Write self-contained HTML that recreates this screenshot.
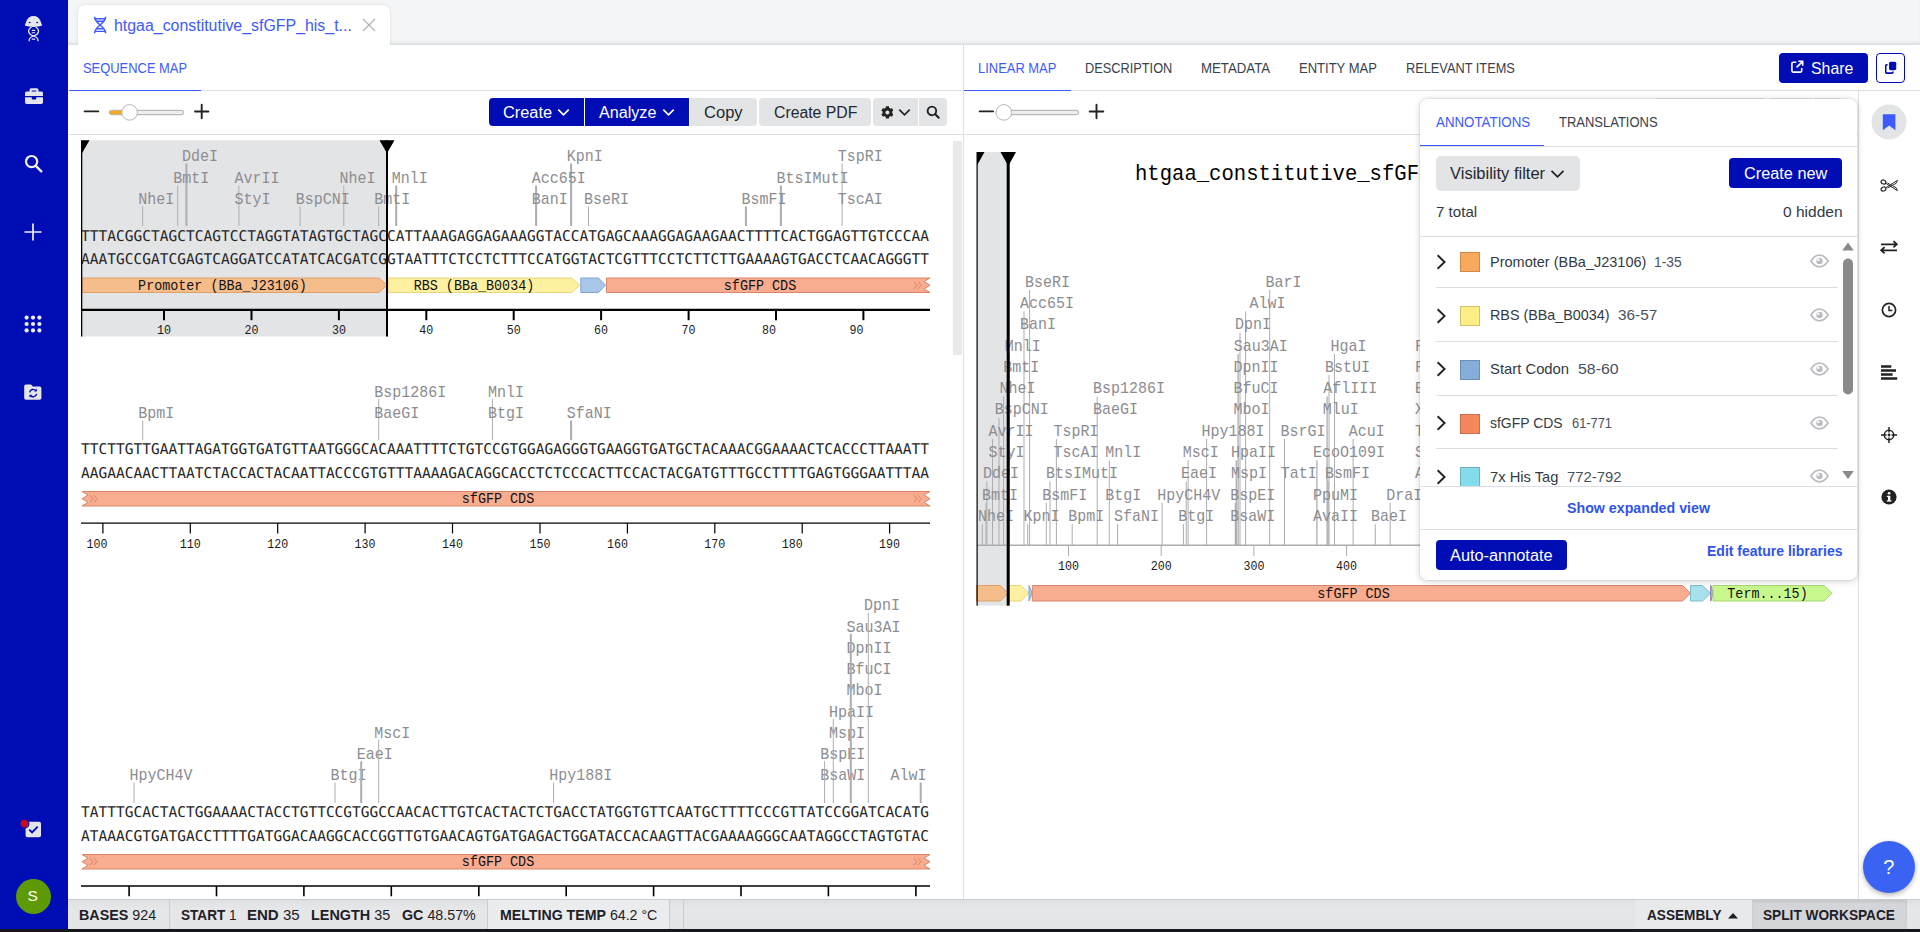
<!DOCTYPE html>
<html lang="en">
<head>
<meta charset="utf-8">
<title>htgaa_constitutive_sfGFP_his_t... · Benchling</title>
<style>
*{box-sizing:border-box;margin:0;padding:0}
html,body{width:1920px;height:932px;overflow:hidden;background:#fff}
body{font-family:"Liberation Sans",sans-serif;color:#24292f;position:relative}
.abs{position:absolute}
.t{position:absolute;white-space:nowrap;line-height:1;transform-origin:0 50%}
#nav{position:absolute;left:0;top:0;width:68px;height:932px;background:#000db5}
#nav svg{position:absolute;overflow:visible}
#tabbar{position:absolute;left:68px;top:0;width:1852px;height:45px;background:#f4f5f7;box-shadow:inset 0 -3px 3px -1px rgba(120,140,150,.22)}
#tab{position:absolute;left:10px;top:5px;width:312px;height:40px;background:#fff;border-radius:7px 7px 0 0;box-shadow:0 0 3px rgba(0,0,0,.12)}
#main{position:absolute;left:68px;top:45px;width:1852px;height:854px;background:#fff}
.hline{position:absolute;height:1px;background:#dcdee1}
.vline{position:absolute;width:1px;background:#dcdee1}
.blue{color:#3d5afe}
.btn{position:absolute;height:28px;top:98px;border-radius:3px;background:#e3e4e6;color:#24292f}
.btn.pri{background:#000db5;color:#fff}
svg text.enz{font-family:"Liberation Mono",monospace;font-size:16.4px;fill:#8d8d91}
svg text.bp{font-family:"DejaVu Sans Mono","Liberation Mono",monospace;font-size:14.8px;fill:#262626;text-rendering:geometricPrecision}
svg text.tick{font-family:"Liberation Mono",monospace;font-size:12.9px;fill:#1a1a1a}
svg text.feat{font-family:"Liberation Mono",monospace;font-size:15.4px;fill:#111}
#status{position:absolute;left:68px;top:899px;width:1852px;height:30px;background:linear-gradient(#dfe0e2,#e6e7e9 30%,#e3e4e6);border-top:1px solid #c9ccd0}
#status .t{font-size:14px;color:#1d2026;top:8px}
#status b{font-weight:700}
#bottomline{position:absolute;left:0;top:929px;width:1920px;height:3px;background:#15171c}
#panel{position:absolute;left:1420px;top:99px;width:437px;height:481px;background:#fff;border-radius:7px;box-shadow:0 1px 6px rgba(40,50,70,.24),0 0 0 .5px rgba(40,50,70,.10)}
#panel .t{font-size:15px;color:#333a44}
.sw{position:absolute;left:40px;width:20px;height:20px;border:1px solid rgba(0,0,0,.18)}
</style>
</head>
<body>
<div id="nav">
<!-- logo -->
<svg style="left:0;top:0" width="68" height="60" viewBox="0 0 68 60">
<path d="M24.6 25.6 C26.3 23 26.3 16 33.5 15.9 C40.7 16 40.7 23 42.4 25.600 C40 26.400 36.500 26.800 33.500 27.100 C30.500 26.800 27 26.400 24.600 25.600 Z" fill="#e7e8ec"/>
<ellipse cx="29.700" cy="22.600" rx="1" ry="0.750" fill="#000db5"/><ellipse cx="37.200" cy="22.600" rx="1" ry="0.750" fill="#000db5"/>
<path d="M31.600 27 C26.500 30 28.500 34.500 33.600 36 C38 37.300 38.200 39.500 38 41.300" fill="none" stroke="#e7e8ec" stroke-width="1.300"/>
<path d="M35.600 27 C40.700 30 38.700 34.500 33.600 36 C29.200 37.300 29 39.500 29.200 41.300" fill="none" stroke="#e7e8ec" stroke-width="1.300"/>
<path d="M31.800 30.400H35.200M31.800 32.700H35.200M31.800 39.100H35.200" stroke="#e7e8ec" stroke-width="1.100"/>
</svg>
<!-- briefcase -->
<svg style="left:24.8px;top:87.2px" width="18" height="18" viewBox="0 0 512 512"><path fill="#e4e5ea" d="M320 336c0 8.84-7.16 16-16 16h-96c-8.84 0-16-7.160-16-16v-48H0v144c0 25.600 22.400 48 48 48h416c25.600 0 48-22.400 48-48V288H320v48zm144-208h-80V80c0-25.600-22.400-48-48-48H176c-25.600 0-48 22.400-48 48v48H48c-25.600 0-48 22.400-48 48v80h512v-80c0-25.600-22.400-48-48-48zm-144 0H192V96h128v32z"/></svg>
<!-- search -->
<svg style="left:24px;top:154px" width="19" height="19" viewBox="0 0 19 19"><circle cx="7.6" cy="7.6" r="5.6" fill="none" stroke="#f0f1f5" stroke-width="2.2"/><path d="M11.8 11.8 L17.3 17.3" stroke="#f0f1f5" stroke-width="2.4" stroke-linecap="round"/></svg>
<!-- plus -->
<svg style="left:24px;top:223px" width="18" height="18" viewBox="0 0 18 18"><path d="M9 0.5v17M0.5 9h17" stroke="#f0f1f5" stroke-width="1.7"/></svg>
<!-- grid -->
<svg style="left:24px;top:315px" width="18" height="18" viewBox="0 0 18 18" fill="#eceef3">
<circle cx="2.6" cy="2.6" r="2.1"/><circle cx="9" cy="2.6" r="2.1"/><circle cx="15.4" cy="2.6" r="2.1"/>
<circle cx="2.6" cy="9" r="2.1"/><circle cx="9" cy="9" r="2.1"/><circle cx="15.4" cy="9" r="2.1"/>
<circle cx="2.6" cy="15.4" r="2.1"/><circle cx="9" cy="15.4" r="2.1"/><circle cx="15.4" cy="15.4" r="2.1"/>
</svg>
<!-- folder sync -->
<svg style="left:24px;top:383px" width="18" height="18" viewBox="0 0 18 18">
<path d="M1.8 1.5 h5.2 l1.8 2 h7 a1.6 1.6 0 0 1 1.6 1.6 v10 a1.6 1.6 0 0 1 -1.6 1.6 h-14 a1.6 1.6 0 0 1 -1.6 -1.6 v-12 a1.6 1.6 0 0 1 1.6 -1.6 Z" fill="#e4e5ea"/>
<path d="M5.6 9.4 a3.6 3.6 0 0 1 6.3 -1.7 M12.6 10.8 a3.6 3.6 0 0 1 -6.3 1.7" fill="none" stroke="#000db5" stroke-width="1.4"/>
<path d="M12.8 5.6 v2.8 h-2.8 Z M5.4 14.6 v-2.8 h2.8 Z" fill="#000db5"/>
</svg>
<!-- tasks -->
<svg style="left:18.4px;top:813.5px" width="30" height="32" viewBox="0 0 30 32">
<rect x="7.6" y="7.8" width="15.4" height="15.4" rx="1.8" fill="#e4e5ea"/>
<path d="M11.2 15.6 l2.9 2.9 l5.6 -5.8" fill="none" stroke="#000db5" stroke-width="1.9"/>
<circle cx="6.4" cy="9.700" r="4.500" fill="#c40d1c" stroke="#000db5" stroke-width="1.200"/>
</svg>
<!-- avatar -->
<div class="abs" style="left:16px;top:879px;width:35px;height:35px;border-radius:50%;background:#5d9a06"></div>
<div class="t" style="left:27.6px;top:888px;font-size:15.5px;color:#fff">S</div>
</div>

<div id="tabbar">
<div id="tab">
<svg class="abs" style="left:14px;top:11px" width="16" height="18" viewBox="0 0 16 18">
<path d="M2.600 0.800 C2.600 8 13.600 10 13.600 17.200 M13.600 0.800 C13.600 8 2.600 10 2.600 17.200" fill="none" stroke="#3d5afe" stroke-width="1.600"/>
<path d="M3.200 2.700H13M4.800 5.300H11.400M4.800 12.800H11.400M3.200 15.400H13" stroke="#3d5afe" stroke-width="1.400"/>
</svg>
<div class="t blue" id="tabtitle" style="left:35.7px;top:12.5px;font-size:16px;transform:scaleX(0.9941)">htgaa_constitutive_sfGFP_his_t...</div>
<svg class="abs" style="left:283px;top:12px" width="16" height="16" viewBox="0 0 16 16"><path d="M2 2 L14 14 M14 2 L2 14" stroke="#b3b6bb" stroke-width="1.3"/></svg>
</div>
</div>

<div id="main">
</div>
<div class="abs" id="ui" style="left:0;top:0;width:1920px;height:899px">
<div class="t blue" id="t_seqmap" style="left:82.95px;top:61px;font-size:14px;transform:scaleX(0.9228)">SEQUENCE MAP</div>
<div class="hline" style="left:69px;top:90px;width:1851px"></div>
<div class="abs" style="left:69px;top:89.5px;width:132px;height:1.6px;background:#3d5afe"></div>
<div class="hline" style="left:69px;top:134px;width:894px"></div>
<div class="vline" style="left:963px;top:45px;height:854px"></div>
<div class="abs" style="left:953px;top:141px;width:9px;height:214px;background:#e8e9eb"></div>
<!-- zoom slider -->
<svg class="abs" style="left:80px;top:98px" width="140" height="28" viewBox="80 98 140 28">
<path d="M84.600 111.400h13.700" stroke="#222" stroke-width="1.900" stroke-linecap="round"/>
<rect x="109.300" y="110.300" width="74.300" height="4.400" rx="2.200" fill="#efeff0" stroke="#a3a3a6" stroke-width="0.900"/>
<rect x="109.800" y="110.800" width="16" height="3.400" rx="1.700" fill="#f7a823"/>
<circle cx="129.600" cy="112.400" r="7.800" fill="#fff" stroke="#b4b6ba" stroke-width="1"/>
<path d="M195 111.500h13.400M201.700 104.800v13.400" stroke="#222" stroke-width="1.900" stroke-linecap="round"/>
</svg>
<!-- buttons -->
<div class="btn pri" style="left:489px;width:95px;border-radius:4px 0 0 4px"></div>
<div class="t" id="t_create" style="left:502.95px;top:105px;font-size:16px;color:#fff;transform:scaleX(1.0223)">Create</div>
<svg class="abs" style="left:557px;top:108px" width="13" height="9" viewBox="0 0 13 9"><path d="M1.3 1.6 L6.5 6.8 L11.7 1.6" fill="none" stroke="#fff" stroke-width="1.7"/></svg>
<div class="btn pri" style="left:585px;width:104px;border-radius:0"></div>
<div class="t" id="t_analyze" style="left:599.2px;top:105px;font-size:16px;color:#fff;transform:scaleX(1.0075)">Analyze</div>
<svg class="abs" style="left:661.5px;top:108px" width="13" height="9" viewBox="0 0 13 9"><path d="M1.3 1.6 L6.5 6.8 L11.7 1.6" fill="none" stroke="#fff" stroke-width="1.7"/></svg>
<div class="btn" style="left:690px;width:67px;border-radius:0 4px 4px 0"></div>
<div class="t" id="t_copy" style="left:704.2px;top:105px;font-size:16px;transform:scaleX(1.0332)">Copy</div>
<div class="btn" style="left:759px;width:112px;border-radius:4px"></div>
<div class="t" id="t_createpdf" style="left:773.7px;top:105px;font-size:16px;transform:scaleX(0.9868)">Create PDF</div>
<div class="btn" style="left:873px;width:45px;border-radius:4px 0 0 4px"></div>
<svg class="abs" style="left:880.7px;top:105.8px" width="12.8" height="12.8" viewBox="0 0 512 512"><path fill="#222" d="M487.4 315.700l-42.600-24.600c4.300-23.200 4.300-47 0-70.200l42.600-24.600c4.900-2.800 7.100-8.600 5.500-14-11.100-35.600-30-67.800-54.700-94.600-3.800-4.100-10-5.100-14.800-2.300L380.800 110c-17.900-15.400-38.500-27.300-60.800-35.100V25.800c0-5.600-3.900-10.500-9.400-11.700-36.700-8.200-74.300-7.800-109.200 0-5.500 1.200-9.400 6.100-9.400 11.700V75c-22.200 7.900-42.800 19.800-60.800 35.100L88.700 85.500c-4.900-2.800-11-1.900-14.800 2.300-24.700 26.700-43.600 58.900-54.700 94.600-1.700 5.400.6 11.200 5.500 14L67.300 221c-4.300 23.200-4.300 47 0 70.200l-42.600 24.600c-4.900 2.800-7.100 8.600-5.500 14 11.100 35.600 30 67.800 54.700 94.600 3.800 4.100 10 5.100 14.800 2.300l42.600-24.600c17.900 15.400 38.500 27.300 60.800 35.100v49.200c0 5.600 3.900 10.500 9.400 11.700 36.700 8.200 74.300 7.800 109.200 0 5.500-1.200 9.400-6.100 9.400-11.700v-49.200c22.200-7.900 42.800-19.800 60.800-35.100l42.600 24.600c4.900 2.800 11 1.900 14.800-2.300 24.700-26.700 43.600-58.900 54.700-94.600 1.500-5.500-.7-11.300-5.600-14.100zM256 336c-44.100 0-80-35.900-80-80s35.900-80 80-80 80 35.900 80 80-35.900 80-80 80z"/></svg>
<svg class="abs" style="left:897.5px;top:108px" width="13" height="9" viewBox="0 0 13 9"><path d="M1.3 1.6 L6.5 6.8 L11.7 1.6" fill="none" stroke="#222" stroke-width="1.7"/></svg>
<div class="btn" style="left:919px;width:28px;border-radius:0 4px 4px 0"></div>
<svg class="abs" style="left:926px;top:105px" width="15" height="15" viewBox="0 0 15 15"><circle cx="5.9" cy="5.9" r="4.3" fill="none" stroke="#222" stroke-width="1.9"/><path d="M9.1 9.1 L12.700 12.700" stroke="#222" stroke-width="2.100" stroke-linecap="round"/></svg>
<div class="t blue" id="t_linmap" style="left:978.2px;top:61px;font-size:14px;transform:scaleX(0.9238)">LINEAR MAP</div>
<div class="t" id="t_desc" style="left:1084.95px;top:61px;font-size:14px;color:#3b414b;transform:scaleX(0.9129)">DESCRIPTION</div>
<div class="t" id="t_meta" style="left:1201.2px;top:61px;font-size:14px;color:#3b414b;transform:scaleX(0.945)">METADATA</div>
<div class="t" id="t_entity" style="left:1299.2px;top:61px;font-size:14px;color:#3b414b;transform:scaleX(0.9294)">ENTITY MAP</div>
<div class="t" id="t_relevant" style="left:1405.95px;top:61px;font-size:14px;color:#3b414b;transform:scaleX(0.9124)">RELEVANT ITEMS</div>
<div class="abs" style="left:964px;top:89.5px;width:107px;height:1.6px;background:#3d5afe"></div>
<div class="hline" style="left:964px;top:134px;width:894px"></div>
<div class="vline" style="left:1858px;top:91px;height:808px"></div>
<!-- share -->
<div class="abs" style="left:1779px;top:53px;width:89px;height:29.5px;border-radius:4px;background:#000db5"></div>
<svg class="abs" style="left:1790px;top:60px" width="14" height="14" viewBox="0 0 14 14"><path d="M6.2 2.3H3.2a1.3 1.3 0 0 0 -1.3 1.3v7.2a1.3 1.3 0 0 0 1.3 1.3h7.2a1.3 1.3 0 0 0 1.3 -1.3V8" fill="none" stroke="#fff" stroke-width="1.6"/><path d="M8.3 1.3h4.4v4.4M12.4 1.6 L6.6 7.4" fill="none" stroke="#fff" stroke-width="1.6"/></svg>
<div class="t" id="t_share" style="left:1810.95px;top:59.5px;font-size:16.5px;color:#fff;transform:scaleX(0.9618)">Share</div>
<div class="abs" style="left:1876px;top:53px;width:29px;height:29.5px;border-radius:4px;background:#fff;border:1.5px solid #000db5"></div>
<svg class="abs" style="left:1884.6px;top:61px" width="12.3" height="13.2" viewBox="0 0 14 15"><rect x="4.6" y="0.8" width="8.2" height="9.6" rx="1.8" fill="#000db5"/><path d="M3 4.2H2.2a1.4 1.4 0 0 0 -1.4 1.4v6.8a1.4 1.4 0 0 0 1.4 1.4h5.6a1.4 1.4 0 0 0 1.4 -1.4V12" fill="none" stroke="#000db5" stroke-width="1.8"/></svg>
<!-- zoom slider (right) -->
<svg class="abs" style="left:975px;top:98px" width="140" height="28" viewBox="975 98 140 28">
<path d="M979.700 111.400h13.400" stroke="#222" stroke-width="1.900" stroke-linecap="round"/>
<rect x="996" y="110.300" width="82.600" height="4.400" rx="2.200" fill="#efeff0" stroke="#a3a3a6" stroke-width="0.900"/>
<circle cx="1003.800" cy="112.400" r="7.800" fill="#fff" stroke="#b4b6ba" stroke-width="1"/>
<path d="M1089.700 111.500h13.600M1096.500 104.800v13.400" stroke="#222" stroke-width="1.900" stroke-linecap="round"/>
</svg>
<div class="abs" style="left:1656px;top:98px;width:108px;height:2px;background:#e3e4e6"></div>
<div class="abs" style="left:1770px;top:98px;width:42px;height:2px;background:#e3e4e6"></div>
<div class="abs" style="left:1814px;top:98px;width:26px;height:2px;background:#e3e4e6"></div>
</div>
<svg class="abs" style="left:0;top:0" width="1920" height="899" viewBox="0 0 1920 899">
<g id="seqmap">
<rect x="82" y="140.3" width="305" height="196.2" fill="#e3e4e6"/>
<line x1="186.4" x2="186.4" y1="163.5" y2="226.0" stroke="#adadb1" stroke-width="2"/><text class="enz" x="182.0" y="161.3" textLength="36.0" lengthAdjust="spacingAndGlyphs">DdeI</text>
<line x1="571.1" x2="571.1" y1="163.5" y2="226.0" stroke="#adadb1" stroke-width="2"/><text class="enz" x="566.7" y="161.3" textLength="36.0" lengthAdjust="spacingAndGlyphs">KpnI</text>
<line x1="842.1" x2="842.1" y1="163.5" y2="226.0" stroke="#adadb1" stroke-width="1"/><text class="enz" x="837.7" y="161.3" textLength="45.0" lengthAdjust="spacingAndGlyphs">TspRI</text>
<line x1="177.7" x2="177.7" y1="185.5" y2="226.0" stroke="#adadb1" stroke-width="1"/><text class="enz" x="173.3" y="183.3" textLength="36.0" lengthAdjust="spacingAndGlyphs">BmtI</text>
<line x1="238.9" x2="238.9" y1="185.5" y2="226.0" stroke="#adadb1" stroke-width="1"/><text class="enz" x="234.5" y="183.3" textLength="45.0" lengthAdjust="spacingAndGlyphs">AvrII</text>
<line x1="343.8" x2="343.8" y1="185.5" y2="226.0" stroke="#adadb1" stroke-width="1"/><text class="enz" x="339.4" y="183.3" textLength="36.0" lengthAdjust="spacingAndGlyphs">NheI</text>
<line x1="396.2" x2="396.2" y1="185.5" y2="226.0" stroke="#adadb1" stroke-width="2"/><text class="enz" x="391.8" y="183.3" textLength="36.0" lengthAdjust="spacingAndGlyphs">MnlI</text>
<line x1="536.1" x2="536.1" y1="185.5" y2="226.0" stroke="#adadb1" stroke-width="2"/><text class="enz" x="531.7" y="183.3" textLength="54.0" lengthAdjust="spacingAndGlyphs">Acc65I</text>
<line x1="780.9" x2="780.9" y1="185.5" y2="226.0" stroke="#adadb1" stroke-width="2"/><text class="enz" x="776.5" y="183.3" textLength="72.0" lengthAdjust="spacingAndGlyphs">BtsIMutI</text>
<line x1="142.7" x2="142.7" y1="206.5" y2="226.0" stroke="#adadb1" stroke-width="1"/><text class="enz" x="138.3" y="204.3" textLength="36.0" lengthAdjust="spacingAndGlyphs">NheI</text>
<text class="enz" x="234.5" y="204.3" textLength="36.0" lengthAdjust="spacingAndGlyphs">StyI</text>
<line x1="300.1" x2="300.1" y1="206.5" y2="226.0" stroke="#adadb1" stroke-width="1"/><text class="enz" x="295.7" y="204.3" textLength="54.0" lengthAdjust="spacingAndGlyphs">BspCNI</text>
<line x1="378.7" x2="378.7" y1="206.5" y2="226.0" stroke="#adadb1" stroke-width="1"/><text class="enz" x="374.3" y="204.3" textLength="36.0" lengthAdjust="spacingAndGlyphs">BmtI</text>
<text class="enz" x="531.7" y="204.3" textLength="36.0" lengthAdjust="spacingAndGlyphs">BanI</text>
<line x1="588.5" x2="588.5" y1="206.5" y2="226.0" stroke="#adadb1" stroke-width="1"/><text class="enz" x="584.1" y="204.3" textLength="45.0" lengthAdjust="spacingAndGlyphs">BseRI</text>
<line x1="745.9" x2="745.9" y1="206.5" y2="226.0" stroke="#adadb1" stroke-width="2"/><text class="enz" x="741.5" y="204.3" textLength="45.0" lengthAdjust="spacingAndGlyphs">BsmFI</text>
<text class="enz" x="837.7" y="204.3" textLength="45.0" lengthAdjust="spacingAndGlyphs">TscAI</text>
<text class="bp" x="81.1" y="241.3" textLength="848" lengthAdjust="spacingAndGlyphs">TTTACGGCTAGCTCAGTCCTAGGTATAGTGCTAGCCATTAAAGAGGAGAAAGGTACCATGAGCAAAGGAGAAGAACTTTTCACTGGAGTTGTCCCAA</text>
<text class="bp" x="81.1" y="264.3" textLength="848" lengthAdjust="spacingAndGlyphs">AAATGCCGATCGAGTCAGGATCCATATCACGATCGGTAATTTCTCCTCTTTCCATGGTACTCGTTTCCTCTTCTTGAAAAGTGACCTCAACAGGGTT</text>
<path d="M82.0 278.0 H379.0 L387.0 285.2 L379.0 292.5 H82.0 Z" fill="#f5bd8a" stroke="#e0a06a" stroke-width="1"/><text class="feat" x="222.5" y="289.8" text-anchor="middle" textLength="168.8" lengthAdjust="spacingAndGlyphs">Promoter (BBa_J23106)</text>
<path d="M388.0 278.0 H571.8 L579.8 285.2 L571.8 292.5 H388.0 Z" fill="#fdf0a0" stroke="#e6d67c" stroke-width="1"/><text class="feat" x="474.0" y="289.8" text-anchor="middle" textLength="120.6" lengthAdjust="spacingAndGlyphs">RBS (BBa_B0034)</text>
<path d="M580.8 278.0 H598.5 L605.5 285.2 L598.5 292.5 H580.8 Z" fill="#a9c7e8" stroke="#7fa6d0" stroke-width="1"/>
<path d="M606.5 278.0 H930.0 l-6 3.62 l6 3.62 l-6 3.62 l6 3.62 H606.5 Z" fill="#f8ac90" stroke="#d98468" stroke-width="1"/><path d="M914.0 281.8 l3 3.5 l-3 3.5 M918.0 281.8 l3 3.5 l-3 3.5" fill="none" stroke="#d98468" stroke-width="1"/><text class="feat" x="760.0" y="289.8" text-anchor="middle" textLength="72.4" lengthAdjust="spacingAndGlyphs">sfGFP CDS</text>
<line x1="81" x2="930" y1="309.9" y2="309.9" stroke="#000" stroke-width="2.3"/><line x1="164.0" x2="164.0" y1="309.9" y2="320.2" stroke="#000" stroke-width="2"/><text class="tick" x="164.0" y="333.8" text-anchor="middle" textLength="14.0" lengthAdjust="spacingAndGlyphs">10</text><line x1="251.5" x2="251.5" y1="309.9" y2="320.2" stroke="#000" stroke-width="2"/><text class="tick" x="251.5" y="333.8" text-anchor="middle" textLength="14.0" lengthAdjust="spacingAndGlyphs">20</text><line x1="338.9" x2="338.9" y1="309.9" y2="320.2" stroke="#000" stroke-width="2"/><text class="tick" x="338.9" y="333.8" text-anchor="middle" textLength="14.0" lengthAdjust="spacingAndGlyphs">30</text><line x1="426.3" x2="426.3" y1="309.9" y2="320.2" stroke="#000" stroke-width="2"/><text class="tick" x="426.3" y="333.8" text-anchor="middle" textLength="14.0" lengthAdjust="spacingAndGlyphs">40</text><line x1="513.7" x2="513.7" y1="309.9" y2="320.2" stroke="#000" stroke-width="2"/><text class="tick" x="513.7" y="333.8" text-anchor="middle" textLength="14.0" lengthAdjust="spacingAndGlyphs">50</text><line x1="601.1" x2="601.1" y1="309.9" y2="320.2" stroke="#000" stroke-width="2"/><text class="tick" x="601.1" y="333.8" text-anchor="middle" textLength="14.0" lengthAdjust="spacingAndGlyphs">60</text><line x1="688.6" x2="688.6" y1="309.9" y2="320.2" stroke="#000" stroke-width="2"/><text class="tick" x="688.6" y="333.8" text-anchor="middle" textLength="14.0" lengthAdjust="spacingAndGlyphs">70</text><line x1="776.0" x2="776.0" y1="309.9" y2="320.2" stroke="#000" stroke-width="2"/><text class="tick" x="769.0" y="333.8" text-anchor="middle" textLength="14.0" lengthAdjust="spacingAndGlyphs">80</text><line x1="863.4" x2="863.4" y1="309.9" y2="320.2" stroke="#000" stroke-width="2"/><text class="tick" x="856.4" y="333.8" text-anchor="middle" textLength="14.0" lengthAdjust="spacingAndGlyphs">90</text>
<rect x="81" y="140.3" width="1.3" height="196.2" fill="#000"/>
<path d="M82 140.3 h7.5 l-7.5 13 Z" fill="#000"/>
<rect x="386" y="140.3" width="2" height="196.2" fill="#000"/>
<path d="M379.5 140.3 h15 l-7.5 13 Z" fill="#000"/>
<line x1="378.7" x2="378.7" y1="398.9" y2="440.0" stroke="#adadb1" stroke-width="1"/><text class="enz" x="374.3" y="396.7" textLength="72.0" lengthAdjust="spacingAndGlyphs">Bsp1286I</text>
<line x1="492.4" x2="492.4" y1="398.9" y2="440.0" stroke="#adadb1" stroke-width="1"/><text class="enz" x="488.0" y="396.7" textLength="36.0" lengthAdjust="spacingAndGlyphs">MnlI</text>
<line x1="142.7" x2="142.7" y1="420.5" y2="440.0" stroke="#adadb1" stroke-width="1"/><text class="enz" x="138.3" y="418.3" textLength="36.0" lengthAdjust="spacingAndGlyphs">BpmI</text>
<text class="enz" x="374.3" y="418.3" textLength="45.0" lengthAdjust="spacingAndGlyphs">BaeGI</text>
<text class="enz" x="488.0" y="418.3" textLength="36.0" lengthAdjust="spacingAndGlyphs">BtgI</text>
<line x1="571.1" x2="571.1" y1="420.5" y2="440.0" stroke="#adadb1" stroke-width="2"/><text class="enz" x="566.7" y="418.3" textLength="45.0" lengthAdjust="spacingAndGlyphs">SfaNI</text>
<text class="bp" x="81.1" y="454.3" textLength="848" lengthAdjust="spacingAndGlyphs">TTCTTGTTGAATTAGATGGTGATGTTAATGGGCACAAATTTTCTGTCCGTGGAGAGGGTGAAGGTGATGCTACAAACGGAAAACTCACCCTTAAATT</text>
<text class="bp" x="81.1" y="477.8" textLength="848" lengthAdjust="spacingAndGlyphs">AAGAACAACTTAATCTACCACTACAATTACCCGTGTTTAAAAGACAGGCACCTCTCCCACTTCCACTACGATGTTTGCCTTTTGAGTGGGAATTTAA</text>
<path d="M82.0 491.5 H930.0 l-6 3.62 l6 3.62 l-6 3.62 l6 3.62 H82.0 l6 -3.62 l-6 -3.62 l6 -3.62 l-6 -3.62 Z" fill="#f8ac90" stroke="#d98468" stroke-width="1"/><path d="M90.0 495.2 l3 3.5 l-3 3.5 M94.0 495.2 l3 3.5 l-3 3.5" fill="none" stroke="#d98468" stroke-width="1"/><path d="M914.0 495.2 l3 3.5 l-3 3.5 M918.0 495.2 l3 3.5 l-3 3.5" fill="none" stroke="#d98468" stroke-width="1"/><text class="feat" x="498.0" y="503.2" text-anchor="middle" textLength="72.4" lengthAdjust="spacingAndGlyphs">sfGFP CDS</text>
<line x1="81" x2="930" y1="523.1" y2="523.1" stroke="#000" stroke-width="1.1"/><line x1="102.9" x2="102.9" y1="523.1" y2="533.4" stroke="#000" stroke-width="1.2"/><text class="tick" x="96.9" y="547.7" text-anchor="middle" textLength="21.0" lengthAdjust="spacingAndGlyphs">100</text><line x1="190.3" x2="190.3" y1="523.1" y2="533.4" stroke="#000" stroke-width="1.2"/><text class="tick" x="190.3" y="547.7" text-anchor="middle" textLength="21.0" lengthAdjust="spacingAndGlyphs">110</text><line x1="277.7" x2="277.7" y1="523.1" y2="533.4" stroke="#000" stroke-width="1.2"/><text class="tick" x="277.7" y="547.7" text-anchor="middle" textLength="21.0" lengthAdjust="spacingAndGlyphs">120</text><line x1="365.1" x2="365.1" y1="523.1" y2="533.4" stroke="#000" stroke-width="1.2"/><text class="tick" x="365.1" y="547.7" text-anchor="middle" textLength="21.0" lengthAdjust="spacingAndGlyphs">130</text><line x1="452.5" x2="452.5" y1="523.1" y2="533.4" stroke="#000" stroke-width="1.2"/><text class="tick" x="452.5" y="547.7" text-anchor="middle" textLength="21.0" lengthAdjust="spacingAndGlyphs">140</text><line x1="540.0" x2="540.0" y1="523.1" y2="533.4" stroke="#000" stroke-width="1.2"/><text class="tick" x="540.0" y="547.7" text-anchor="middle" textLength="21.0" lengthAdjust="spacingAndGlyphs">150</text><line x1="627.4" x2="627.4" y1="523.1" y2="533.4" stroke="#000" stroke-width="1.2"/><text class="tick" x="617.4" y="547.7" text-anchor="middle" textLength="21.0" lengthAdjust="spacingAndGlyphs">160</text><line x1="714.8" x2="714.8" y1="523.1" y2="533.4" stroke="#000" stroke-width="1.2"/><text class="tick" x="714.8" y="547.7" text-anchor="middle" textLength="21.0" lengthAdjust="spacingAndGlyphs">170</text><line x1="802.2" x2="802.2" y1="523.1" y2="533.4" stroke="#000" stroke-width="1.2"/><text class="tick" x="792.2" y="547.7" text-anchor="middle" textLength="21.0" lengthAdjust="spacingAndGlyphs">180</text><line x1="889.6" x2="889.6" y1="523.1" y2="533.4" stroke="#000" stroke-width="1.2"/><text class="tick" x="889.6" y="547.7" text-anchor="middle" textLength="21.0" lengthAdjust="spacingAndGlyphs">190</text>
<line x1="134.0" x2="134.0" y1="782.5" y2="803.0" stroke="#adadb1" stroke-width="1"/><text class="enz" x="129.6" y="780.3" textLength="63.0" lengthAdjust="spacingAndGlyphs">HpyCH4V</text>
<line x1="335.0" x2="335.0" y1="782.5" y2="803.0" stroke="#adadb1" stroke-width="1"/><text class="enz" x="330.6" y="780.3" textLength="36.0" lengthAdjust="spacingAndGlyphs">BtgI</text>
<line x1="361.2" x2="361.2" y1="761.3" y2="803.0" stroke="#adadb1" stroke-width="2"/><text class="enz" x="356.8" y="759.1" textLength="36.0" lengthAdjust="spacingAndGlyphs">EaeI</text>
<line x1="378.7" x2="378.7" y1="740.0" y2="803.0" stroke="#adadb1" stroke-width="1"/><text class="enz" x="374.3" y="737.8" textLength="36.0" lengthAdjust="spacingAndGlyphs">MscI</text>
<line x1="553.6" x2="553.6" y1="782.5" y2="803.0" stroke="#adadb1" stroke-width="1"/><text class="enz" x="549.2" y="780.3" textLength="63.0" lengthAdjust="spacingAndGlyphs">Hpy188I</text>
<text class="enz" x="820.2" y="780.3" textLength="45.0" lengthAdjust="spacingAndGlyphs">BsaWI</text>
<line x1="824.6" x2="824.6" y1="761.3" y2="803.0" stroke="#adadb1" stroke-width="1"/><text class="enz" x="820.2" y="759.1" textLength="45.0" lengthAdjust="spacingAndGlyphs">BspEI</text>
<text class="enz" x="828.9" y="737.8" textLength="36.0" lengthAdjust="spacingAndGlyphs">MspI</text>
<line x1="833.3" x2="833.3" y1="718.8" y2="803.0" stroke="#adadb1" stroke-width="1"/><text class="enz" x="828.9" y="716.6" textLength="45.0" lengthAdjust="spacingAndGlyphs">HpaII</text>
<text class="enz" x="846.4" y="695.3" textLength="36.0" lengthAdjust="spacingAndGlyphs">MboI</text>
<text class="enz" x="846.4" y="674.1" textLength="45.0" lengthAdjust="spacingAndGlyphs">BfuCI</text>
<text class="enz" x="846.4" y="652.9" textLength="45.0" lengthAdjust="spacingAndGlyphs">DpnII</text>
<line x1="850.8" x2="850.8" y1="633.8" y2="803.0" stroke="#adadb1" stroke-width="2"/><text class="enz" x="846.4" y="631.6" textLength="54.0" lengthAdjust="spacingAndGlyphs">Sau3AI</text>
<line x1="868.3" x2="868.3" y1="612.6" y2="803.0" stroke="#adadb1" stroke-width="1"/><text class="enz" x="863.9" y="610.4" textLength="36.0" lengthAdjust="spacingAndGlyphs">DpnI</text>
<line x1="920.7" x2="920.7" y1="782.5" y2="803.0" stroke="#adadb1" stroke-width="2"/><text class="enz" x="890.6" y="780.3" textLength="36.0" lengthAdjust="spacingAndGlyphs">AlwI</text>
<text class="bp" x="81.1" y="817.3" textLength="848" lengthAdjust="spacingAndGlyphs">TATTTGCACTACTGGAAAACTACCTGTTCCGTGGCCAACACTTGTCACTACTCTGACCTATGGTGTTCAATGCTTTTCCCGTTATCCGGATCACATG</text>
<text class="bp" x="81.1" y="840.8" textLength="848" lengthAdjust="spacingAndGlyphs">ATAAACGTGATGACCTTTTGATGGACAAGGCACCGGTTGTGAACAGTGATGAGACTGGATACCACAAGTTACGAAAAGGGCAATAGGCCTAGTGTAC</text>
<path d="M82.0 854.5 H930.0 l-6 3.62 l6 3.62 l-6 3.62 l6 3.62 H82.0 l6 -3.62 l-6 -3.62 l6 -3.62 l-6 -3.62 Z" fill="#f8ac90" stroke="#d98468" stroke-width="1"/><path d="M90.0 858.2 l3 3.5 l-3 3.5 M94.0 858.2 l3 3.5 l-3 3.5" fill="none" stroke="#d98468" stroke-width="1"/><path d="M914.0 858.2 l3 3.5 l-3 3.5 M918.0 858.2 l3 3.5 l-3 3.5" fill="none" stroke="#d98468" stroke-width="1"/><text class="feat" x="498.0" y="866.2" text-anchor="middle" textLength="72.4" lengthAdjust="spacingAndGlyphs">sfGFP CDS</text>
<line x1="81" x2="930" y1="886.0" y2="886.0" stroke="#000" stroke-width="1.3"/><line x1="129.1" x2="129.1" y1="886.0" y2="896.3" stroke="#000" stroke-width="1.6"/><text class="tick" x="129.1" y="910.1" text-anchor="middle" textLength="21.0" lengthAdjust="spacingAndGlyphs">200</text><line x1="216.5" x2="216.5" y1="886.0" y2="896.3" stroke="#000" stroke-width="1.6"/><text class="tick" x="216.5" y="910.1" text-anchor="middle" textLength="21.0" lengthAdjust="spacingAndGlyphs">210</text><line x1="303.9" x2="303.9" y1="886.0" y2="896.3" stroke="#000" stroke-width="1.6"/><text class="tick" x="303.9" y="910.1" text-anchor="middle" textLength="21.0" lengthAdjust="spacingAndGlyphs">220</text><line x1="391.3" x2="391.3" y1="886.0" y2="896.3" stroke="#000" stroke-width="1.6"/><text class="tick" x="391.3" y="910.1" text-anchor="middle" textLength="21.0" lengthAdjust="spacingAndGlyphs">230</text><line x1="478.8" x2="478.8" y1="886.0" y2="896.3" stroke="#000" stroke-width="1.6"/><text class="tick" x="478.8" y="910.1" text-anchor="middle" textLength="21.0" lengthAdjust="spacingAndGlyphs">240</text><line x1="566.2" x2="566.2" y1="886.0" y2="896.3" stroke="#000" stroke-width="1.6"/><text class="tick" x="566.2" y="910.1" text-anchor="middle" textLength="21.0" lengthAdjust="spacingAndGlyphs">250</text><line x1="653.6" x2="653.6" y1="886.0" y2="896.3" stroke="#000" stroke-width="1.6"/><text class="tick" x="653.6" y="910.1" text-anchor="middle" textLength="21.0" lengthAdjust="spacingAndGlyphs">260</text><line x1="741.0" x2="741.0" y1="886.0" y2="896.3" stroke="#000" stroke-width="1.6"/><text class="tick" x="741.0" y="910.1" text-anchor="middle" textLength="21.0" lengthAdjust="spacingAndGlyphs">270</text><line x1="828.4" x2="828.4" y1="886.0" y2="896.3" stroke="#000" stroke-width="1.6"/><text class="tick" x="828.4" y="910.1" text-anchor="middle" textLength="21.0" lengthAdjust="spacingAndGlyphs">280</text><line x1="915.9" x2="915.9" y1="886.0" y2="896.3" stroke="#000" stroke-width="1.6"/><text class="tick" x="915.9" y="910.1" text-anchor="middle" textLength="21.0" lengthAdjust="spacingAndGlyphs">290</text>
</g>
<g id="linmap">
<rect x="977" y="152" width="31" height="453.7" fill="#e3e4e6"/>
<text x="1135" y="179.6" font-family="Liberation Mono, monospace" font-size="21.6" fill="#000" textLength="531" lengthAdjust="spacingAndGlyphs">htgaa_constitutive_sfGFP_his_tag_terminator</text>
<line x1="982.3" x2="982.3" y1="524.1" y2="545" stroke="#adadb1" stroke-width="1"/>
<line x1="1027.7" x2="1027.7" y1="524.1" y2="545" stroke="#adadb1" stroke-width="1"/>
<line x1="1072.2" x2="1072.2" y1="524.1" y2="545" stroke="#adadb1" stroke-width="1"/>
<line x1="1117.6" x2="1117.6" y1="524.1" y2="545" stroke="#adadb1" stroke-width="1"/>
<line x1="1183.4" x2="1183.4" y1="524.1" y2="545" stroke="#adadb1" stroke-width="1"/>
<line x1="1375.3" x2="1375.3" y1="524.1" y2="545" stroke="#adadb1" stroke-width="1"/>
<line x1="986.0" x2="986.0" y1="502.8" y2="545" stroke="#adadb1" stroke-width="1"/>
<line x1="1046.3" x2="1046.3" y1="502.8" y2="545" stroke="#adadb1" stroke-width="1"/>
<line x1="1162.1" x2="1162.1" y1="502.8" y2="545" stroke="#adadb1" stroke-width="1"/>
<line x1="1235.4" x2="1235.4" y1="502.8" y2="545" stroke="#adadb1" stroke-width="1.3"/>
<line x1="1390.2" x2="1390.2" y1="502.8" y2="545" stroke="#adadb1" stroke-width="1"/>
<line x1="986.9" x2="986.9" y1="481.5" y2="545" stroke="#adadb1" stroke-width="1"/>
<line x1="1050.0" x2="1050.0" y1="481.5" y2="545" stroke="#adadb1" stroke-width="1"/>
<line x1="1186.2" x2="1186.2" y1="481.5" y2="545" stroke="#adadb1" stroke-width="1"/>
<line x1="1328.1" x2="1328.1" y1="481.5" y2="545" stroke="#adadb1" stroke-width="1.3"/>
<line x1="1109.3" x2="1109.3" y1="460.3" y2="545" stroke="#adadb1" stroke-width="1"/>
<line x1="1188.1" x2="1188.1" y1="460.3" y2="545" stroke="#adadb1" stroke-width="1"/>
<line x1="1236.3" x2="1236.3" y1="460.3" y2="545" stroke="#adadb1" stroke-width="1.3"/>
<line x1="1316.9" x2="1316.9" y1="460.3" y2="545" stroke="#adadb1" stroke-width="1.3"/>
<line x1="992.5" x2="992.5" y1="439.0" y2="545" stroke="#adadb1" stroke-width="1"/>
<line x1="1056.4" x2="1056.4" y1="439.0" y2="545" stroke="#adadb1" stroke-width="1"/>
<line x1="1206.6" x2="1206.6" y1="439.0" y2="545" stroke="#adadb1" stroke-width="1"/>
<line x1="1284.5" x2="1284.5" y1="439.0" y2="545" stroke="#adadb1" stroke-width="1"/>
<line x1="1353.1" x2="1353.1" y1="439.0" y2="545" stroke="#adadb1" stroke-width="1"/>
<line x1="999.0" x2="999.0" y1="417.7" y2="545" stroke="#adadb1" stroke-width="1"/>
<line x1="1003.6" x2="1003.6" y1="396.4" y2="545" stroke="#adadb1" stroke-width="1"/>
<line x1="1097.2" x2="1097.2" y1="396.4" y2="545" stroke="#adadb1" stroke-width="1"/>
<line x1="1327.1" x2="1327.1" y1="396.4" y2="545" stroke="#adadb1" stroke-width="1.3"/>
<line x1="1007.3" x2="1007.3" y1="375.1" y2="545" stroke="#adadb1" stroke-width="1"/>
<line x1="1329.0" x2="1329.0" y1="375.1" y2="545" stroke="#adadb1" stroke-width="1"/>
<line x1="1009.2" x2="1009.2" y1="353.9" y2="545" stroke="#adadb1" stroke-width="1"/>
<line x1="1238.1" x2="1238.1" y1="353.9" y2="545" stroke="#adadb1" stroke-width="1.3"/>
<line x1="1334.5" x2="1334.5" y1="353.9" y2="545" stroke="#adadb1" stroke-width="1"/>
<line x1="1422.6" x2="1422.6" y1="353.9" y2="545" stroke="#adadb1" stroke-width="1"/>
<line x1="1240.0" x2="1240.0" y1="332.6" y2="545" stroke="#adadb1" stroke-width="1"/>
<line x1="1024.0" x2="1024.0" y1="311.3" y2="545" stroke="#adadb1" stroke-width="1"/>
<line x1="1245.6" x2="1245.6" y1="311.3" y2="545" stroke="#adadb1" stroke-width="1"/>
<line x1="1029.6" x2="1029.6" y1="290.0" y2="545" stroke="#adadb1" stroke-width="1"/>
<line x1="1269.7" x2="1269.7" y1="290.0" y2="545" stroke="#adadb1" stroke-width="1"/>
<text class="enz" x="977.9" y="520.8" textLength="36.0" lengthAdjust="spacingAndGlyphs">NheI</text>
<text class="enz" x="1023.5" y="520.8" textLength="36.0" lengthAdjust="spacingAndGlyphs">KpnI</text>
<text class="enz" x="1068.2" y="520.8" textLength="36.0" lengthAdjust="spacingAndGlyphs">BpmI</text>
<text class="enz" x="1114.1" y="520.8" textLength="45.0" lengthAdjust="spacingAndGlyphs">SfaNI</text>
<text class="enz" x="1178.3" y="520.8" textLength="36.0" lengthAdjust="spacingAndGlyphs">BtgI</text>
<text class="enz" x="1230.3" y="520.8" textLength="45.0" lengthAdjust="spacingAndGlyphs">BsaWI</text>
<text class="enz" x="1313.1" y="520.8" textLength="45.0" lengthAdjust="spacingAndGlyphs">AvaII</text>
<text class="enz" x="1371.1" y="520.8" textLength="36.0" lengthAdjust="spacingAndGlyphs">BaeI</text>
<text class="enz" x="981.9" y="499.5" textLength="36.0" lengthAdjust="spacingAndGlyphs">BmtI</text>
<text class="enz" x="1042.2" y="499.5" textLength="45.0" lengthAdjust="spacingAndGlyphs">BsmFI</text>
<text class="enz" x="1105.2" y="499.5" textLength="36.0" lengthAdjust="spacingAndGlyphs">BtgI</text>
<text class="enz" x="1157.3" y="499.5" textLength="63.0" lengthAdjust="spacingAndGlyphs">HpyCH4V</text>
<text class="enz" x="1230.3" y="499.5" textLength="45.0" lengthAdjust="spacingAndGlyphs">BspEI</text>
<text class="enz" x="1313.1" y="499.5" textLength="45.0" lengthAdjust="spacingAndGlyphs">PpuMI</text>
<text class="enz" x="1386.2" y="499.5" textLength="36.0" lengthAdjust="spacingAndGlyphs">DraI</text>
<text class="enz" x="983.0" y="478.2" textLength="36.0" lengthAdjust="spacingAndGlyphs">DdeI</text>
<text class="enz" x="1046.1" y="478.2" textLength="72.0" lengthAdjust="spacingAndGlyphs">BtsIMutI</text>
<text class="enz" x="1181.1" y="478.2" textLength="36.0" lengthAdjust="spacingAndGlyphs">EaeI</text>
<text class="enz" x="1231.0" y="478.2" textLength="36.0" lengthAdjust="spacingAndGlyphs">MspI</text>
<text class="enz" x="1280.8" y="478.2" textLength="36.0" lengthAdjust="spacingAndGlyphs">TatI</text>
<text class="enz" x="1324.9" y="478.2" textLength="45.0" lengthAdjust="spacingAndGlyphs">BsmFI</text>
<text class="enz" x="1415.0" y="478.2" textLength="36.0" lengthAdjust="spacingAndGlyphs">AseI</text>
<text class="enz" x="988.5" y="457.0" textLength="36.0" lengthAdjust="spacingAndGlyphs">StyI</text>
<text class="enz" x="1053.4" y="457.0" textLength="45.0" lengthAdjust="spacingAndGlyphs">TscAI</text>
<text class="enz" x="1105.2" y="457.0" textLength="36.0" lengthAdjust="spacingAndGlyphs">MnlI</text>
<text class="enz" x="1182.7" y="457.0" textLength="36.0" lengthAdjust="spacingAndGlyphs">MscI</text>
<text class="enz" x="1231.0" y="457.0" textLength="45.0" lengthAdjust="spacingAndGlyphs">HpaII</text>
<text class="enz" x="1313.1" y="457.0" textLength="72.0" lengthAdjust="spacingAndGlyphs">EcoO109I</text>
<text class="enz" x="1415.0" y="457.0" textLength="36.0" lengthAdjust="spacingAndGlyphs">SspI</text>
<text class="enz" x="988.5" y="435.7" textLength="45.0" lengthAdjust="spacingAndGlyphs">AvrII</text>
<text class="enz" x="1053.4" y="435.7" textLength="45.0" lengthAdjust="spacingAndGlyphs">TspRI</text>
<text class="enz" x="1201.5" y="435.7" textLength="63.0" lengthAdjust="spacingAndGlyphs">Hpy188I</text>
<text class="enz" x="1280.5" y="435.7" textLength="45.0" lengthAdjust="spacingAndGlyphs">BsrGI</text>
<text class="enz" x="1348.8" y="435.7" textLength="36.0" lengthAdjust="spacingAndGlyphs">AcuI</text>
<text class="enz" x="1415.0" y="435.7" textLength="36.0" lengthAdjust="spacingAndGlyphs">TfiI</text>
<text class="enz" x="994.7" y="414.4" textLength="54.0" lengthAdjust="spacingAndGlyphs">BspCNI</text>
<text class="enz" x="1093.0" y="414.4" textLength="45.0" lengthAdjust="spacingAndGlyphs">BaeGI</text>
<text class="enz" x="1233.4" y="414.4" textLength="36.0" lengthAdjust="spacingAndGlyphs">MboI</text>
<text class="enz" x="1322.8" y="414.4" textLength="36.0" lengthAdjust="spacingAndGlyphs">MluI</text>
<text class="enz" x="1415.0" y="414.4" textLength="36.0" lengthAdjust="spacingAndGlyphs">XmnI</text>
<text class="enz" x="999.4" y="393.1" textLength="36.0" lengthAdjust="spacingAndGlyphs">NheI</text>
<text class="enz" x="1093.0" y="393.1" textLength="72.0" lengthAdjust="spacingAndGlyphs">Bsp1286I</text>
<text class="enz" x="1233.4" y="393.1" textLength="45.0" lengthAdjust="spacingAndGlyphs">BfuCI</text>
<text class="enz" x="1323.3" y="393.1" textLength="54.0" lengthAdjust="spacingAndGlyphs">AflIII</text>
<text class="enz" x="1415.0" y="393.1" textLength="36.0" lengthAdjust="spacingAndGlyphs">EciI</text>
<text class="enz" x="1003.3" y="371.8" textLength="36.0" lengthAdjust="spacingAndGlyphs">BmtI</text>
<text class="enz" x="1233.4" y="371.8" textLength="45.0" lengthAdjust="spacingAndGlyphs">DpnII</text>
<text class="enz" x="1324.9" y="371.8" textLength="45.0" lengthAdjust="spacingAndGlyphs">BstUI</text>
<text class="enz" x="1415.0" y="371.8" textLength="36.0" lengthAdjust="spacingAndGlyphs">FauI</text>
<text class="enz" x="1004.8" y="350.6" textLength="36.0" lengthAdjust="spacingAndGlyphs">MnlI</text>
<text class="enz" x="1233.8" y="350.6" textLength="54.0" lengthAdjust="spacingAndGlyphs">Sau3AI</text>
<text class="enz" x="1330.6" y="350.6" textLength="36.0" lengthAdjust="spacingAndGlyphs">HgaI</text>
<text class="enz" x="1415.0" y="350.6" textLength="36.0" lengthAdjust="spacingAndGlyphs">FspI</text>
<text class="enz" x="1019.9" y="329.3" textLength="36.0" lengthAdjust="spacingAndGlyphs">BanI</text>
<text class="enz" x="1234.9" y="329.3" textLength="36.0" lengthAdjust="spacingAndGlyphs">DpnI</text>
<text class="enz" x="1019.9" y="308.0" textLength="54.0" lengthAdjust="spacingAndGlyphs">Acc65I</text>
<text class="enz" x="1249.4" y="308.0" textLength="36.0" lengthAdjust="spacingAndGlyphs">AlwI</text>
<text class="enz" x="1025.0" y="286.7" textLength="45.0" lengthAdjust="spacingAndGlyphs">BseRI</text>
<text class="enz" x="1265.6" y="286.7" textLength="36.0" lengthAdjust="spacingAndGlyphs">BarI</text>
<line x1="977" x2="1832" y1="545.3" y2="545.3" stroke="#adadb1" stroke-width="1.5"/>
<line x1="1068.5" x2="1068.5" y1="545" y2="556" stroke="#adadb1" stroke-width="1"/>
<text class="tick" x="1068.5" y="569.7" text-anchor="middle" textLength="21" lengthAdjust="spacingAndGlyphs">100</text>
<line x1="1161.2" x2="1161.2" y1="545" y2="556" stroke="#adadb1" stroke-width="1"/>
<text class="tick" x="1161.2" y="569.7" text-anchor="middle" textLength="21" lengthAdjust="spacingAndGlyphs">200</text>
<line x1="1253.9" x2="1253.9" y1="545" y2="556" stroke="#adadb1" stroke-width="1"/>
<text class="tick" x="1253.9" y="569.7" text-anchor="middle" textLength="21" lengthAdjust="spacingAndGlyphs">300</text>
<line x1="1346.6" x2="1346.6" y1="545" y2="556" stroke="#adadb1" stroke-width="1"/>
<text class="tick" x="1346.6" y="569.7" text-anchor="middle" textLength="21" lengthAdjust="spacingAndGlyphs">400</text>
<line x1="1439.3" x2="1439.3" y1="545" y2="556" stroke="#adadb1" stroke-width="1"/>
<text class="tick" x="1439.3" y="569.7" text-anchor="middle" textLength="21" lengthAdjust="spacingAndGlyphs">500</text>
<line x1="1532.0" x2="1532.0" y1="545" y2="556" stroke="#adadb1" stroke-width="1"/>
<text class="tick" x="1532.0" y="569.7" text-anchor="middle" textLength="21" lengthAdjust="spacingAndGlyphs">600</text>
<line x1="1624.7" x2="1624.7" y1="545" y2="556" stroke="#adadb1" stroke-width="1"/>
<text class="tick" x="1624.7" y="569.7" text-anchor="middle" textLength="21" lengthAdjust="spacingAndGlyphs">700</text>
<line x1="1717.4" x2="1717.4" y1="545" y2="556" stroke="#adadb1" stroke-width="1"/>
<text class="tick" x="1717.4" y="569.7" text-anchor="middle" textLength="21" lengthAdjust="spacingAndGlyphs">800</text>
<line x1="1810.1" x2="1810.1" y1="545" y2="556" stroke="#adadb1" stroke-width="1"/>
<text class="tick" x="1810.1" y="569.7" text-anchor="middle" textLength="21" lengthAdjust="spacingAndGlyphs">900</text>
<path d="M976.5 585.5 H1000.2 L1008.2 593.2 L1000.2 601.0 H976.5 Z" fill="#f5bd8a" stroke="#e0a06a" stroke-width="1"/>
<path d="M1008.7 585.5 H1021.0 L1029.0 593.2 L1021.0 601.0 H1008.7 Z" fill="#fdf0a0" stroke="#e6d67c" stroke-width="1"/>
<path d="M1029.0 585.5 H1029.0 L1032.0 593.2 L1029.0 601.0 H1029.0 Z" fill="#a9c7e8" stroke="#7fa6d0" stroke-width="1"/>
<path d="M1032.3 585.5 H1682.5 L1690.5 593.2 L1682.5 601.0 H1032.3 Z" fill="#f8ac90" stroke="#d98468" stroke-width="1"/><text class="feat" x="1353.5" y="597.8" text-anchor="middle" textLength="72.4" lengthAdjust="spacingAndGlyphs">sfGFP CDS</text>
<path d="M1690.5 585.5 H1702.5 L1710.5 593.2 L1702.5 601.0 H1690.5 Z" fill="#a8e0ec" stroke="#7fbccb" stroke-width="1"/>
<path d="M1710.5 585.5 H1711.0 L1713.0 593.2 L1711.0 601.0 H1710.5 Z" fill="#b9a3dd" stroke="#9b85c5" stroke-width="1"/>
<path d="M1713.0 585.5 H1824.0 L1832.0 593.2 L1824.0 601.0 H1713.0 Z" fill="#c8f78e" stroke="#a6d870" stroke-width="1"/><text class="feat" x="1767.5" y="597.8" text-anchor="middle" textLength="80.4" lengthAdjust="spacingAndGlyphs">Term...15)</text>
<rect x="976.5" y="152" width="1.2" height="453.7" fill="#000"/>
<path d="M977 152 h7.5 l-7.5 13.5 Z" fill="#000"/>
<rect x="1006.7" y="152" width="3" height="453.7" fill="#000"/>
<path d="M1000.5 152 h15.5 l-7.75 14 Z" fill="#000"/>
</g>
</svg>
<div id="panel">
<div class="t blue" id="t_annot" style="left:15.5px;top:16px;font-size:14px;color:#3d5afe;transform:scaleX(0.9511)">ANNOTATIONS</div>
<div class="t" id="t_transl" style="left:138.8px;top:16px;font-size:14px;color:#3b414b;transform:scaleX(0.9275)">TRANSLATIONS</div>
<div class="hline" style="left:0;top:46.5px;width:437px"></div>
<div class="abs" style="left:0;top:45.8px;width:124px;height:1.4px;background:#3d5afe"></div>
<div class="abs" style="left:16px;top:57px;width:144px;height:35px;border-radius:5px;background:#e3e4e6"></div>
<div class="t" id="t_visfilter" style="left:30.2px;top:66.5px;font-size:16px;color:#24292f;transform:scaleX(1.0318)">Visibility filter</div>
<svg class="abs" style="left:130px;top:70px" width="15" height="10" viewBox="0 0 15 10"><path d="M1.5 1.8 L7.5 7.8 L13.5 1.8" fill="none" stroke="#222" stroke-width="1.8"/></svg>
<div class="abs" style="left:309px;top:59px;width:113px;height:30px;border-radius:4px;background:#000db5"></div>
<div class="t" id="t_createnew" style="left:323.7px;top:66.5px;font-size:16px;color:#fff;transform:scaleX(1.018)">Create new</div>
<div class="t" id="t_total" style="left:15.5px;top:104.8px;transform:scaleX(1.008)">7 total</div>
<div class="t" id="t_hidden" style="left:362.5px;top:104.8px;transform:scaleX(1.0354)">0 hidden</div>
<div class="hline" style="left:0;top:137px;width:437px"></div>
<div class="abs" style="left:0;top:138px;width:437px;height:249px;overflow:hidden">
<svg class="abs" style="left:16px;top:15.8px" width="11" height="18" viewBox="0 0 11 18"><path d="M1.6 2.2 L8.6 9 L1.6 15.8" fill="none" stroke="#222" stroke-width="1.9"/></svg>
<div class="sw" style="top:15.1px;background:#f8a95b"></div>
<div class="t" id="t_row0" style="left:69.9px;top:16.5px;transform:scaleX(0.9669)">Promoter (BBa_J23106)</div>
<div class="t" id="t_rng0" style="left:234.4px;top:16.5px;color:#4a505a;transform:scaleX(0.919)">1-35</div>
<svg class="abs" style="left:390px;top:17.2px" width="19" height="14" viewBox="0 0 19 14"><path d="M1 7 C4 2.2 7 1.2 9.5 1.2 C12 1.2 15 2.2 18 7 C15 11.8 12 12.8 9.5 12.800 C7 12.8 4 11.8 1 7 Z" fill="none" stroke="#bbbdc2" stroke-width="1.8"/><circle cx="9.5" cy="7" r="3.2" fill="#bbbdc2"/><circle cx="8.3" cy="5.8" r="1.2" fill="#fff"/></svg>
<div class="hline" style="left:16px;top:50.0px;width:402px"></div>
<svg class="abs" style="left:16px;top:69.6px" width="11" height="18" viewBox="0 0 11 18"><path d="M1.6 2.2 L8.6 9 L1.6 15.8" fill="none" stroke="#222" stroke-width="1.9"/></svg>
<div class="sw" style="top:68.9px;background:#fdee86"></div>
<div class="t" id="t_row1" style="left:69.9px;top:70.3px;transform:scaleX(0.9554)">RBS (BBa_B0034)</div>
<div class="t" id="t_rng1" style="left:198.2px;top:70.3px;color:#4a505a;transform:scaleX(1.0215)">36-57</div>
<svg class="abs" style="left:390px;top:71.0px" width="19" height="14" viewBox="0 0 19 14"><path d="M1 7 C4 2.2 7 1.2 9.5 1.2 C12 1.2 15 2.2 18 7 C15 11.8 12 12.8 9.5 12.800 C7 12.8 4 11.8 1 7 Z" fill="none" stroke="#bbbdc2" stroke-width="1.8"/><circle cx="9.5" cy="7" r="3.2" fill="#bbbdc2"/><circle cx="8.3" cy="5.8" r="1.2" fill="#fff"/></svg>
<div class="hline" style="left:16px;top:103.8px;width:402px"></div>
<svg class="abs" style="left:16px;top:123.4px" width="11" height="18" viewBox="0 0 11 18"><path d="M1.6 2.2 L8.6 9 L1.6 15.8" fill="none" stroke="#222" stroke-width="1.9"/></svg>
<div class="sw" style="top:122.7px;background:#85add9"></div>
<div class="t" id="t_row2" style="left:69.9px;top:124.1px;transform:scaleX(0.9882)">Start Codon</div>
<div class="t" id="t_rng2" style="left:158.2px;top:124.1px;color:#4a505a;transform:scaleX(1.058)">58-60</div>
<svg class="abs" style="left:390px;top:124.8px" width="19" height="14" viewBox="0 0 19 14"><path d="M1 7 C4 2.2 7 1.2 9.5 1.2 C12 1.2 15 2.2 18 7 C15 11.8 12 12.8 9.5 12.800 C7 12.8 4 11.8 1 7 Z" fill="none" stroke="#bbbdc2" stroke-width="1.8"/><circle cx="9.5" cy="7" r="3.2" fill="#bbbdc2"/><circle cx="8.3" cy="5.8" r="1.2" fill="#fff"/></svg>
<div class="hline" style="left:16px;top:157.6px;width:402px"></div>
<svg class="abs" style="left:16px;top:177.2px" width="11" height="18" viewBox="0 0 11 18"><path d="M1.6 2.2 L8.6 9 L1.6 15.8" fill="none" stroke="#222" stroke-width="1.9"/></svg>
<div class="sw" style="top:176.5px;background:#f4875c"></div>
<div class="t" id="t_row3" style="left:69.9px;top:177.9px;transform:scaleX(0.9311)">sfGFP CDS</div>
<div class="t" id="t_rng3" style="left:152.2px;top:177.9px;color:#4a505a;transform:scaleX(0.8562)">61-771</div>
<svg class="abs" style="left:390px;top:178.6px" width="19" height="14" viewBox="0 0 19 14"><path d="M1 7 C4 2.2 7 1.2 9.5 1.2 C12 1.2 15 2.2 18 7 C15 11.8 12 12.8 9.5 12.800 C7 12.8 4 11.8 1 7 Z" fill="none" stroke="#bbbdc2" stroke-width="1.8"/><circle cx="9.5" cy="7" r="3.2" fill="#bbbdc2"/><circle cx="8.3" cy="5.8" r="1.2" fill="#fff"/></svg>
<div class="hline" style="left:16px;top:211.4px;width:402px"></div>
<svg class="abs" style="left:16px;top:231.0px" width="11" height="18" viewBox="0 0 11 18"><path d="M1.6 2.2 L8.6 9 L1.6 15.8" fill="none" stroke="#222" stroke-width="1.9"/></svg>
<div class="sw" style="top:230.3px;background:#84dbea"></div>
<div class="t" id="t_row4" style="left:69.9px;top:231.7px;transform:scaleX(0.9819)">7x His Tag</div>
<div class="t" id="t_rng4" style="left:147.4px;top:231.7px;color:#4a505a;transform:scaleX(0.9916)">772-792</div>
<svg class="abs" style="left:390px;top:232.4px" width="19" height="14" viewBox="0 0 19 14"><path d="M1 7 C4 2.2 7 1.2 9.5 1.2 C12 1.2 15 2.2 18 7 C15 11.8 12 12.8 9.5 12.800 C7 12.8 4 11.8 1 7 Z" fill="none" stroke="#bbbdc2" stroke-width="1.8"/><circle cx="9.5" cy="7" r="3.2" fill="#bbbdc2"/><circle cx="8.3" cy="5.8" r="1.2" fill="#fff"/></svg>
<div class="hline" style="left:16px;top:265.2px;width:402px"></div>
<svg class="abs" style="left:16px;top:284.8px" width="11" height="18" viewBox="0 0 11 18"><path d="M1.6 2.2 L8.6 9 L1.6 15.8" fill="none" stroke="#222" stroke-width="1.9"/></svg>
<div class="sw" style="top:284.1px;background:#b39ddb"></div>
<div class="t" id="t_row5" style="left:70px;top:285.5px">Stop Codon</div>
<div class="t" id="t_rng5" style="left:157px;top:285.5px;color:#4a505a">793-795</div>
<svg class="abs" style="left:390px;top:286.2px" width="19" height="14" viewBox="0 0 19 14"><path d="M1 7 C4 2.2 7 1.2 9.5 1.2 C12 1.2 15 2.2 18 7 C15 11.8 12 12.8 9.5 12.800 C7 12.8 4 11.8 1 7 Z" fill="none" stroke="#bbbdc2" stroke-width="1.8"/><circle cx="9.5" cy="7" r="3.2" fill="#bbbdc2"/><circle cx="8.3" cy="5.8" r="1.2" fill="#fff"/></svg>
<div class="hline" style="left:16px;top:319.0px;width:402px"></div>
<svg class="abs" style="left:16px;top:338.6px" width="11" height="18" viewBox="0 0 11 18"><path d="M1.6 2.2 L8.6 9 L1.6 15.8" fill="none" stroke="#222" stroke-width="1.9"/></svg>
<div class="sw" style="top:337.9px;background:#b7f36b"></div>
<div class="t" id="t_row6" style="left:70px;top:339.3px">Terminator (BBa_B0015)</div>
<div class="t" id="t_rng6" style="left:240px;top:339.3px;color:#4a505a">796-924</div>
<svg class="abs" style="left:390px;top:340.0px" width="19" height="14" viewBox="0 0 19 14"><path d="M1 7 C4 2.2 7 1.2 9.5 1.2 C12 1.2 15 2.2 18 7 C15 11.8 12 12.8 9.5 12.800 C7 12.8 4 11.8 1 7 Z" fill="none" stroke="#bbbdc2" stroke-width="1.8"/><circle cx="9.5" cy="7" r="3.2" fill="#bbbdc2"/><circle cx="8.3" cy="5.8" r="1.2" fill="#fff"/></svg>
<div class="hline" style="left:16px;top:372.8px;width:402px"></div>
</div>
<!-- scrollbar -->
<svg class="abs" style="left:420px;top:138px" width="17" height="249" viewBox="0 0 17 249">
<path d="M2.2 13.5 L8 5.5 L13.8 13.5 Z" fill="#8a8a8a"/>
<rect x="3" y="21.5" width="10" height="136" rx="5" fill="#8a8a8a"/>
<path d="M2.2 234 L8 242 L13.8 234 Z" fill="#8a8a8a"/>
</svg>
<div class="hline" style="left:0;top:387px;width:437px"></div>
<div class="t" id="t_expanded" style="left:147.4px;top:402px;font-size:14px;font-weight:700;color:#2f54eb;transform:scaleX(1.0154)">Show expanded view</div>
<div class="hline" style="left:0;top:430px;width:437px"></div>
<div class="abs" style="left:16px;top:441px;width:131px;height:30px;border-radius:4px;background:#000db5"></div>
<div class="t" id="t_auto" style="left:30.2px;top:448.5px;font-size:16px;color:#fff;transform:scaleX(1.0206)">Auto-annotate</div>
<div class="t" id="t_editlib" style="left:286.6px;top:445px;font-size:14px;font-weight:700;color:#2f54eb;transform:scaleX(1.0008)">Edit feature libraries</div>
</div>
<!-- right icon strip -->
<svg class="abs" style="left:1859px;top:92px" width="61" height="440" viewBox="1859 92 61 440">
<circle cx="1889" cy="122" r="17.5" fill="#e3e4e6"/>
<path d="M1882.8 114.3h12.6v15.9l-6.3-4.7l-6.3 4.700Z" fill="#3d5afe"/>
<!-- scissors -->
<g fill="none" stroke="#222" stroke-width="1.15"><ellipse cx="1883.5" cy="182" rx="2.5" ry="2" transform="rotate(25 1883.5 182)"/><ellipse cx="1883.5" cy="189" rx="2.5" ry="2" transform="rotate(-25 1883.5 189)"/><path d="M1885.6 183.2 L1897.4 190.6 L1896 187.6 L1887.4 183 M1885.600 187.800 L1897.400 180.400 L1896 183.400 L1887.400 188" stroke-width="0.95" stroke-linejoin="round"/></g>
<!-- swap -->
<g fill="none" stroke="#222" stroke-width="1.8"><path d="M1881 244.300H1896.500M1893.400 241.200L1896.800 244.300L1893.400 247.400"/><path d="M1897 250.300H1881.500M1884.600 247.200L1881.200 250.300L1884.600 253.400"/></g>
<!-- clock -->
<circle cx="1889" cy="310" r="6.600" fill="none" stroke="#222" stroke-width="1.7"/><path d="M1889 306v4.500h3.400" fill="none" stroke="#222" stroke-width="1.500"/>
<!-- align -->
<g stroke="#222" stroke-width="2.5"><path d="M1881 366.600h10.300M1881 370.600h15M1881 374.600h11.600M1881 378.600h16.200"/></g>
<!-- crosshair -->
<g fill="none" stroke="#222" stroke-width="1.500"><circle cx="1889" cy="435" r="4.700"/><path d="M1889 427v5.500M1889 437.500v5.500M1881 435h5.500M1891.500 435h5.500"/></g><circle cx="1889" cy="435" r="1.400" fill="#222"/>
<!-- info -->
<circle cx="1889" cy="497" r="7.600" fill="#222"/><rect x="1888" y="495.800" width="2.300" height="5" fill="#fff"/><circle cx="1889.100" cy="493.300" r="1.300" fill="#fff"/><rect x="1886.800" y="500.300" width="4.700" height="1.300" fill="#fff"/><rect x="1886.800" y="495.800" width="2" height="1.200" fill="#fff"/>
</svg>
<!-- help -->
<div class="abs" style="left:1863px;top:841px;width:52px;height:52px;border-radius:50%;background:#3b63f3;box-shadow:0 2px 5px rgba(0,0,0,.3)"></div>
<div class="t" id="t_help" style="left:1883.2px;top:857px;font-size:20px;color:#fff">?</div>

<div id="status">
<div class="abs" style="left:419px;top:0;width:182px;height:29px;background:#ebecee"></div>
<div class="abs" style="left:1567px;top:0;width:117px;height:29px;background:#e8e9eb"></div>
<div class="abs" style="left:1684px;top:0;width:155px;height:29px;background:#d4d5d8;box-shadow:inset 0 2px 3px rgba(0,0,0,.08)"></div>
<div class="vline" style="left:101px;top:0;height:29px;background:#c9ccd0"></div>
<div class="vline" style="left:419px;top:0;height:29px;background:#c9ccd0"></div>
<div class="vline" style="left:601px;top:0;height:29px;background:#c9ccd0"></div>
<div class="vline" style="left:615px;top:0;height:29px;background:#c9ccd0"></div>
<div class="t" id="s_bases" style="left:11.2px;transform:scaleX(1.0214)"><b>BASES</b> 924</div>
<div class="t" id="s_start" style="left:113.3px;transform:scaleX(0.9701)"><b>START</b> 1</div>
<div class="t" id="s_end" style="left:179px;transform:scaleX(1.0728)"><b>END</b> 35</div>
<div class="t" id="s_len" style="left:242.8px;transform:scaleX(1.0282)"><b>LENGTH</b> 35</div>
<div class="t" id="s_gc" style="left:333.9px;transform:scaleX(1.0197)"><b>GC</b> 48.57%</div>
<div class="t" id="s_melt" style="left:432.3px;transform:scaleX(1.0117)"><b>MELTING TEMP</b> 64.2 °C</div>
<div class="t" id="s_asm" style="left:1579.3px;transform:scaleX(0.9737)"><b>ASSEMBLY</b></div>
<svg class="abs" style="left:1659px;top:12px" width="12" height="8" viewBox="0 0 12 8"><path d="M1 6.500 L6 1 L11 6.500 Z" fill="#1d2026"/></svg>
<div class="t" id="s_split" style="left:1695.4px;transform:scaleX(0.9772)"><b>SPLIT WORKSPACE</b></div>
</div>

<div id="bottomline"></div>
</body>
</html>
